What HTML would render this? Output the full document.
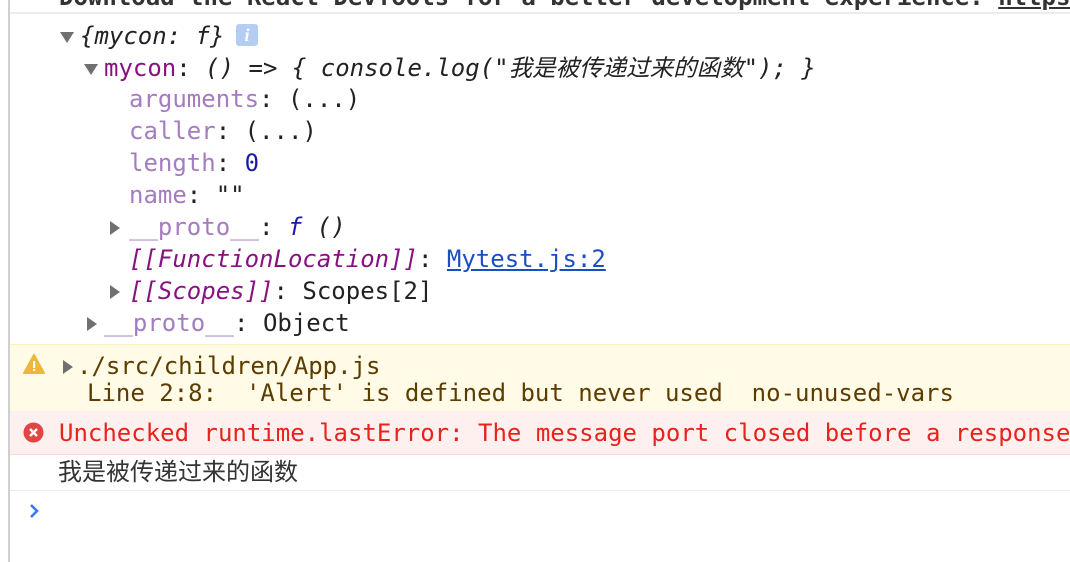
<!DOCTYPE html>
<html><head><meta charset="utf-8"><style>
html,body{margin:0;padding:0;width:1070px;height:562px;overflow:hidden;background:#fff;position:relative}
.m{font-family:"DejaVu Sans Mono","Liberation Mono","Noto Sans CJK SC",monospace;font-size:24px;line-height:32px;white-space:pre;position:absolute;color:#222}
.i{font-style:italic}
.p{color:#a57cbf}
.pp{color:#881280}
.n{color:#1a1aa6}
.lnk{color:#1a4fc4;text-decoration:underline}
.tri{position:absolute;width:0;height:0}
.down{border-left:7px solid transparent;border-right:7px solid transparent;border-top:11px solid #707070}
.right{border-top:7px solid transparent;border-bottom:7px solid transparent;border-left:10px solid #707070}
.cjk{font-family:"Liberation Sans","Noto Sans CJK SC",sans-serif}
</style></head><body>
<div style="position:absolute;left:8px;top:0;width:2px;height:562px;background:#d0d0d0"></div>
<div class="m" style="left:59px;top:-19px;color:#333;font-weight:bold">Download the React DevTools for a better development experience: <span style="text-decoration:underline">https</span></div>
<div style="position:absolute;left:10px;top:12px;width:1060px;height:2px;background:#ececec"></div>

<div class="tri down" style="left:60px;top:32px"></div>
<div class="m i" style="left:80px;top:20px">{mycon: f}</div>
<div style="position:absolute;left:236px;top:24px;width:22px;height:22px;background:#b5cdf2;border-radius:3px;color:#fff;font:italic bold 18px 'Liberation Serif',serif;text-align:center;line-height:22px">i</div>

<div class="tri down" style="left:84px;top:64px"></div>
<div class="m" style="left:104px;top:52px"><span class="pp">mycon</span>: <span class="i">() =&gt; { console.log("<span class="cjk" style="font-size:23.5px">我是被传递过来的函数</span>"); }</span></div>
<div class="m" style="left:129px;top:83px"><span class="p">arguments</span>: (...)</div>
<div class="m" style="left:129px;top:115px"><span class="p">caller</span>: (...)</div>
<div class="m" style="left:129px;top:147px"><span class="p">length</span>: <span class="n">0</span></div>
<div class="m" style="left:129px;top:179px"><span class="p">name</span>: ""</div>
<div class="tri right" style="left:110px;top:221px"></div>
<div class="m" style="left:129px;top:211px"><span class="p">__proto__</span>: <span class="i"><span class="n">f</span> ()</span></div>
<div class="m" style="left:129px;top:243px"><span class="pp i">[[FunctionLocation]]</span>: <span class="lnk">Mytest.js:2</span></div>
<div class="tri right" style="left:110px;top:285px"></div>
<div class="m" style="left:129px;top:275px"><span class="pp i">[[Scopes]]</span>: Scopes[2]</div>
<div class="tri right" style="left:87px;top:317px"></div>
<div class="m" style="left:104px;top:307px"><span class="p">__proto__</span>: Object</div>

<div style="position:absolute;left:10px;top:344px;width:1060px;height:66px;background:#fffbe6;border-top:1px solid #fff1b8;border-bottom:1px solid #fff1b8"></div>
<svg style="position:absolute;left:23px;top:354px" width="22" height="20" viewBox="0 0 22 20"><path d="M11 1 L21 19 L1 19 Z" fill="#eab93b" stroke="#eab93b" stroke-linejoin="round" stroke-width="2"/><rect x="10" y="7" width="2.2" height="7" fill="#fff"/><rect x="10" y="15" width="2.2" height="2" fill="#fff"/></svg>
<div class="tri right" style="left:63px;top:360px;border-left-color:#707070"></div>
<div class="m" style="left:77px;top:350px;color:#5c3c00">./src/children/App.js</div>
<div class="m" style="left:87px;top:377px;color:#5c3c00">Line 2:8:  'Alert' is defined but never used  no-unused-vars</div>

<div style="position:absolute;left:10px;top:411px;width:1060px;height:43px;background:#fff0f0;border-bottom:1px solid #fcd6d6"></div>
<svg style="position:absolute;left:23px;top:422px" width="21" height="21" viewBox="0 0 21 21"><circle cx="10.5" cy="10.5" r="10" fill="#e04646"/><path d="M7 7 L14 14 M14 7 L7 14" stroke="#fff" stroke-width="2.4"/></svg>
<div class="m" style="left:59px;top:417px;color:#e8231c">Unchecked runtime.lastError: The message port closed before a response</div>

<div class="cjk" style="position:absolute;left:58px;top:457px;font-size:24px;line-height:32px;color:#333">我是被传递过来的函数</div>
<div style="position:absolute;left:10px;top:490px;width:1060px;height:1px;background:#ececec"></div>
<svg style="position:absolute;left:28px;top:503px" width="12" height="16" viewBox="0 0 12 16"><path d="M3 2 L9 8 L3 14" fill="none" stroke="#3a7af0" stroke-width="2.6"/></svg>
</body></html>
